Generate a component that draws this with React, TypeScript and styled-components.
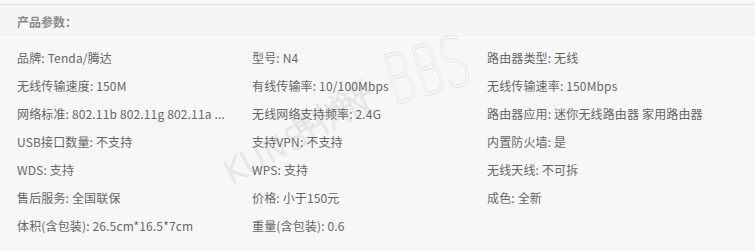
import styled, { createGlobalStyle } from 'styled-components';

const GlobalStyle = createGlobalStyle`
	html, body {
		margin: 0;
		padding: 0;
		background: #f7f7f7;
	}
	body {
		font-family: "Microsoft YaHei", "Noto Sans CJK SC", "Noto Sans", sans-serif;
		font-size: 12px;
		color: #666;
	}
`;

const Panel = styled.div`
	position: relative;
	width: 755px;
	height: 251px;
	padding-top: 4px;
	box-sizing: border-box;
	background: #f7f7f7;
	overflow: hidden;
`;

const Header = styled.div`
	height: 32px;
	padding-left: 17px;
	display: flex;
	align-items: center;
	border-top: 1px solid #e3e3e3;
	border-bottom: 1px solid #fff;
	background: #f5f5f5;
	font-weight: bold;
	color: #8c8c8c;
`;

const Grid = styled.ul`
	position: relative;
	z-index: 1;
	list-style: none;
	margin: 0;
	padding: 6px 0 0 17px;
	display: grid;
	grid-template-columns: 235px 235px 235px;
	grid-auto-rows: 28px;
`;

const Item = styled.li`
	white-space: nowrap;
	line-height: 28px;
	letter-spacing: 0.15px;
`;

const Mark = styled.div<{ $x: number; $y: number; $size: number; $angle: number; $sx?: number; $cjk?: boolean }>`
	position: absolute;
	left: ${(p) => p.$x}px;
	top: ${(p) => p.$y}px;
	font-size: ${(p) => p.$size}px;
	line-height: 1;
	transform: rotate(${(p) => p.$angle}deg) scaleX(${(p) => p.$sx ?? 1});
	transform-origin: left bottom;
	pointer-events: none;
	white-space: nowrap;
	color: #fbfbfb;
	-webkit-text-stroke: 1px #e2e2e2;
	font-family: ${(p) => (p.$cjk ? '"Noto Sans CJK SC", sans-serif' : '"DejaVu Sans", sans-serif')};
	font-weight: 300;
	letter-spacing: ${(p) => (p.$cjk ? 2 : 1)}px;
`;

const params: [string, string][] = [
	['品牌', 'Tenda/腾达'],
	['型号', 'N4'],
	['路由器类型', '无线'],
	['无线传输速度', '150M'],
	['有线传输率', '10/100Mbps'],
	['无线传输速率', '150Mbps'],
	['网络标准', '802.11b 802.11g 802.11a ...'],
	['无线网络支持频率', '2.4G'],
	['路由器应用', '迷你无线路由器 家用路由器'],
	['USB接口数量', '不支持'],
	['支持VPN', '不支持'],
	['内置防火墙', '是'],
	['WDS', '支持'],
	['WPS', '支持'],
	['无线天线', '不可拆'],
	['售后服务', '全国联保'],
	['价格', '小于150元'],
	['成色', '全新'],
	['体积(含包装)', '26.5cm*16.5*7cm'],
	['重量(含包装)', '0.6'],
];

const App = () => (
	<>
		<GlobalStyle />
		<Panel>
			<Header>产品参数：</Header>
			<Mark $x={396} $y={46} $size={70} $angle={-16} $sx={0.62}>BBS</Mark>
			<Mark $x={298} $y={116} $size={20} $angle={-30} $cjk>昆山论坛</Mark>
			<Mark $x={232} $y={158} $size={32} $angle={-28}>KUNSHAN</Mark>
			<Grid>
				{params.map(([key, value]) => (
					<Item key={key}>
						{key}: {value}
					</Item>
				))}
			</Grid>
		</Panel>
	</>
);

export default App;
